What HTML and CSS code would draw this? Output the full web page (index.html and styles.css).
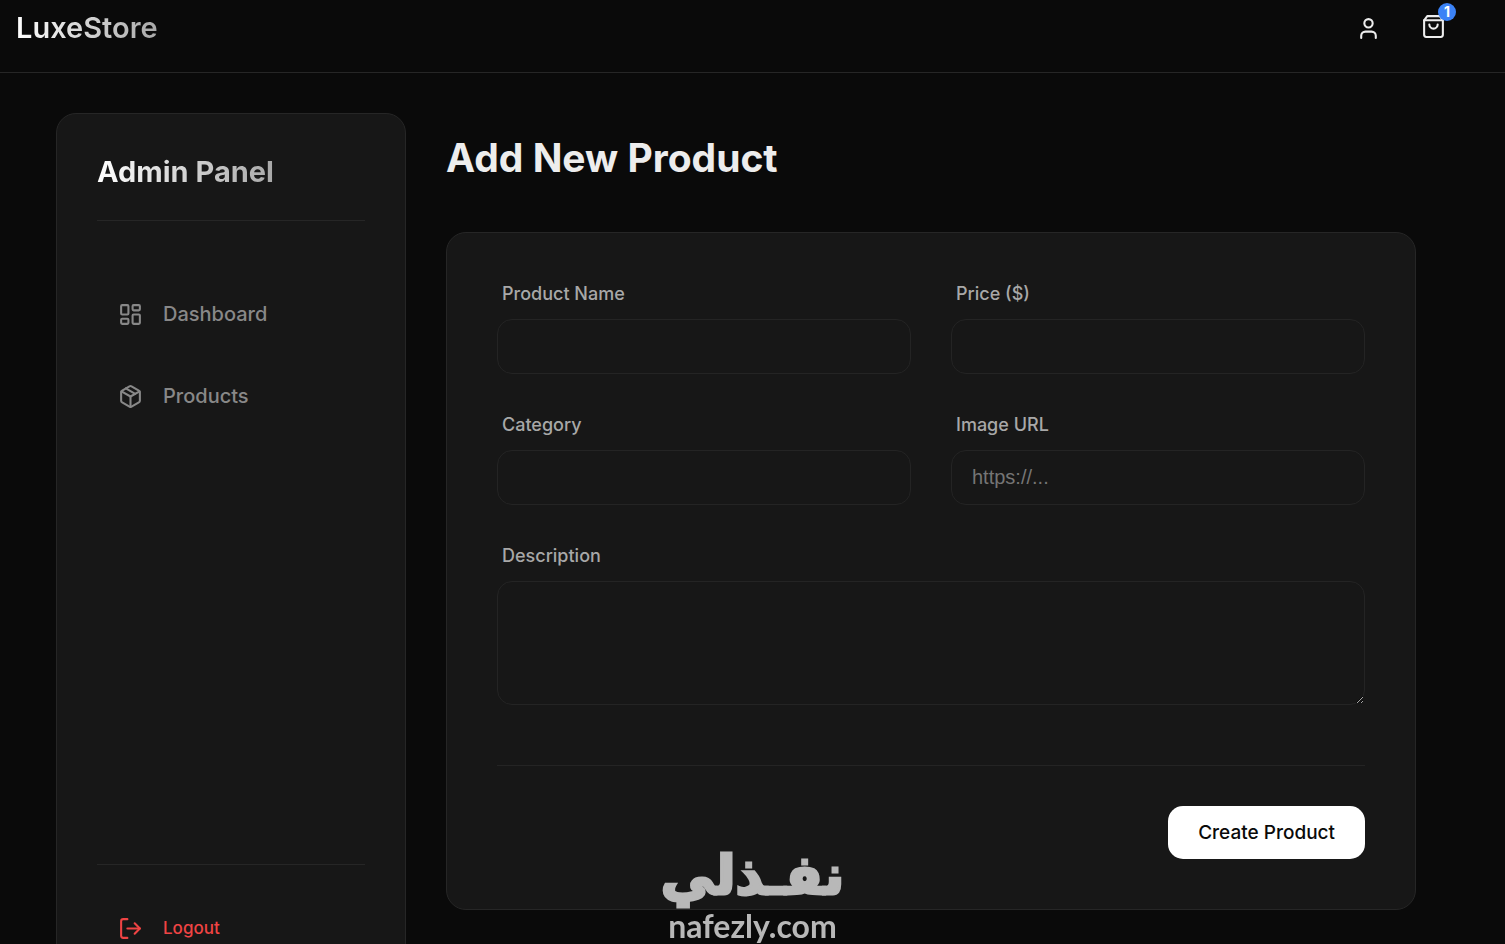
FILE: index.html
```html
<!DOCTYPE html>
<html lang="en">
<head>
<meta charset="utf-8">
<meta name="viewport" content="width=device-width, initial-scale=1">
<title>LuxeStore Admin</title>
<link rel="stylesheet" href="styles.css">
</head>
<body>
<header class="topbar">
  <a class="brand" href="#">LuxeStore</a>
  <nav class="topbar-actions" aria-label="Account">
    <a class="icon-link" href="#" aria-label="Account">
      <svg class="icon" viewBox="0 0 24 24"><path d="M19 21v-2a4 4 0 0 0-4-4H9a4 4 0 0 0-4 4v2"/><circle cx="12" cy="7" r="4"/></svg>
    </a>
    <a class="icon-link cart" href="#" aria-label="Cart">
      <svg class="icon" viewBox="0 0 24 24"><path d="M6 2 3 6v14a2 2 0 0 0 2 2h14a2 2 0 0 0 2-2V6l-3-4Z"/><path d="M3 6h18"/><path d="M16 10a4 4 0 0 1-8 0"/></svg>
      <span class="badge">1</span>
    </a>
  </nav>
</header>
<div class="layout">
  <aside class="sidebar">
    <div class="sidebar-head"><h2 class="sidebar-title">Admin Panel</h2></div>
    <nav class="menu" aria-label="Admin">
      <a class="menu-item" href="#">
        <svg class="icon" viewBox="0 0 24 24"><rect x="3" y="3" width="7" height="9" rx="1"/><rect x="14" y="3" width="7" height="5" rx="1"/><rect x="14" y="12" width="7" height="9" rx="1"/><rect x="3" y="16" width="7" height="5" rx="1"/></svg>
        Dashboard
      </a>
      <a class="menu-item" href="#">
        <svg class="icon" viewBox="0 0 24 24"><path d="m7.500 4.270 9 5.150"/><path d="M21 8a2 2 0 0 0-1-1.730l-7-4a2 2 0 0 0-2 0l-7 4A2 2 0 0 0 3 8v8a2 2 0 0 0 1 1.730l7 4a2 2 0 0 0 2 0l7-4A2 2 0 0 0 21 16Z"/><path d="m3.300 7 8.700 5 8.700-5"/><path d="M12 22V12"/></svg>
        Products
      </a>
    </nav>
    <div class="sidebar-foot">
      <button class="menu-item logout" type="button">
        <svg class="icon" viewBox="0 0 24 24"><path d="M9 21H5a2 2 0 0 1-2-2V5a2 2 0 0 1 2-2h4"/><path d="m16 17 5-5-5-5"/><path d="M21 12H9"/></svg>
        Logout
      </button>
    </div>
  </aside>
  <main class="content">
    <h1 class="page-title">Add New Product</h1>
    <form class="card">
      <div class="fields">
        <div class="field">
          <label class="label" for="name">Product Name</label>
          <input class="control" id="name" type="text">
        </div>
        <div class="field">
          <label class="label" for="price">Price ($)</label>
          <input class="control" id="price" type="text" inputmode="decimal">
        </div>
        <div class="field">
          <label class="label" for="category">Category</label>
          <input class="control" id="category" type="text">
        </div>
        <div class="field">
          <label class="label" for="image">Image URL</label>
          <input class="control" id="image" type="url" placeholder="https://...">
        </div>
        <div class="field field-wide">
          <label class="label" for="description">Description</label>
          <textarea class="control control-area" id="description"></textarea>
        </div>
      </div>
      <div class="form-actions">
        <button class="submit" type="button">Create Product</button>
      </div>
    </form>
  </main>
</div>
<div class="watermark">
  <span class="watermark-ar" lang="ar" dir="rtl">نفـذلي</span>
  <span class="watermark-en">nafezly.com</span>
</div>
</body>
</html>
```
FILE: styles.css
```css
* {
  box-sizing: border-box;
}

html {
  background: #0a0a0a;
  color-scheme: dark;
  scrollbar-width: none;
}

body {
  margin: 0;
  color: #ededed;
  font-family: Inter, "Liberation Sans", sans-serif;
  font-size: 20px;
}

a {
  color: inherit;
  text-decoration: none;
}

.icon {
  display: block;
  flex: none;
  width: 25px;
  height: 25px;
  fill: none;
  stroke: currentColor;
  stroke-width: 2;
  stroke-linecap: round;
  stroke-linejoin: round;
}

.topbar {
  display: flex;
  align-items: center;
  justify-content: space-between;
  padding: 8px 59px 24px 16px;
  border-bottom: 1px solid #262626;
}

.brand,
.sidebar-title {
  background: linear-gradient(90deg, #fff, #a8a8a8);
  background-clip: text;
  color: transparent;
  font-size: 29px;
  font-weight: 700;
  line-height: 40px;
}

.brand {
  font-weight: 600;
}

.topbar-actions {
  display: flex;
  align-items: center;
  gap: 40px;
}

.icon-link {
  position: relative;
}

.cart {
  padding-bottom: 4px;
}

.badge {
  position: absolute;
  top: -11px;
  right: -10px;
  width: 18px;
  height: 18px;
  border-radius: 50%;
  background: #3b82f6;
  color: #fff;
  font-size: 14px;
  font-weight: 700;
  line-height: 18px;
  text-align: center;
}

.layout {
  display: flex;
  align-items: flex-start;
  gap: 40px;
  padding: 40px 89px 40px 56px;
}

.sidebar {
  display: flex;
  flex: none;
  flex-direction: column;
  width: 350px;
  min-height: calc(100vh - 57px);
  padding: 38px 40px 40px;
  border: 1px solid #262626;
  border-radius: 20px;
  background: #171717;
}

.sidebar-head {
  display: flex;
  padding-bottom: 28px;
  border-bottom: 1px solid #262626;
}

.sidebar-title {
  margin: 0;
}

.menu {
  display: flex;
  flex: 1;
  flex-direction: column;
  gap: 20px;
  padding-top: 62px;
}

.menu-item {
  display: flex;
  align-items: center;
  gap: 20px;
  height: 62px;
  padding: 0 21px;
  color: #888;
  font-weight: 500;
}

.sidebar-foot {
  padding-top: 32px;
  border-top: 1px solid #262626;
}

.logout {
  width: 100%;
  border: 0;
  background: none;
  color: #ef4444;
  font-family: inherit;
  font-size: 17px;
}

.content {
  flex: 1;
  min-width: 0;
}

.page-title {
  margin: 20px 0 49px;
  font-size: 39px;
  font-weight: 700;
  line-height: 50px;
}

.card {
  padding: 50px;
  border: 1px solid #262626;
  border-radius: 20px;
  background: #171717;
}

.fields {
  display: grid;
  grid-template-columns: 1fr 1fr;
  gap: 40px;
}

.field {
  display: flex;
  flex-direction: column;
  gap: 14px;
}

.field-wide {
  grid-column: 1 / -1;
}

.label {
  padding-left: 5px;
  color: #a8a8a8;
  font-size: 18px;
  font-weight: 500;
  line-height: 22px;
}

.control {
  width: 100%;
  height: 55px;
  padding: 0 20px;
  border: 1px solid #242424;
  border-radius: 15px;
  outline: 0;
  background: #171717;
  color: #ededed;
  font-family: "Liberation Sans", Arial, sans-serif;
  font-size: 20px;
}

.control::placeholder {
  color: #757575;
}

.control-area {
  height: 124px;
  padding: 16px 20px;
  resize: vertical;
}

.form-actions {
  display: flex;
  justify-content: flex-end;
  margin-top: 60px;
  padding-top: 40px;
  border-top: 1px solid #242424;
}

.submit {
  height: 53px;
  padding: 0 30px;
  border: 0;
  border-radius: 15px;
  background: #fff;
  color: #0a0a0a;
  font-family: inherit;
  font-size: 19px;
  font-weight: 500;
}

.watermark {
  position: fixed;
  bottom: 0;
  left: 50%;
  display: flex;
  flex-direction: column;
  align-items: center;
  transform: translateX(-50%);
  color: #b8b8b8;
  font-weight: 700;
  pointer-events: none;
}

.watermark-ar {
  font-family: "DejaVu Sans", sans-serif;
  font-size: 54px;
  line-height: 64px;
  -webkit-text-stroke: 3px #b8b8b8;
}

.watermark-en {
  font-family: Lato, sans-serif;
  font-size: 32px;
  line-height: 36px;
}
```
